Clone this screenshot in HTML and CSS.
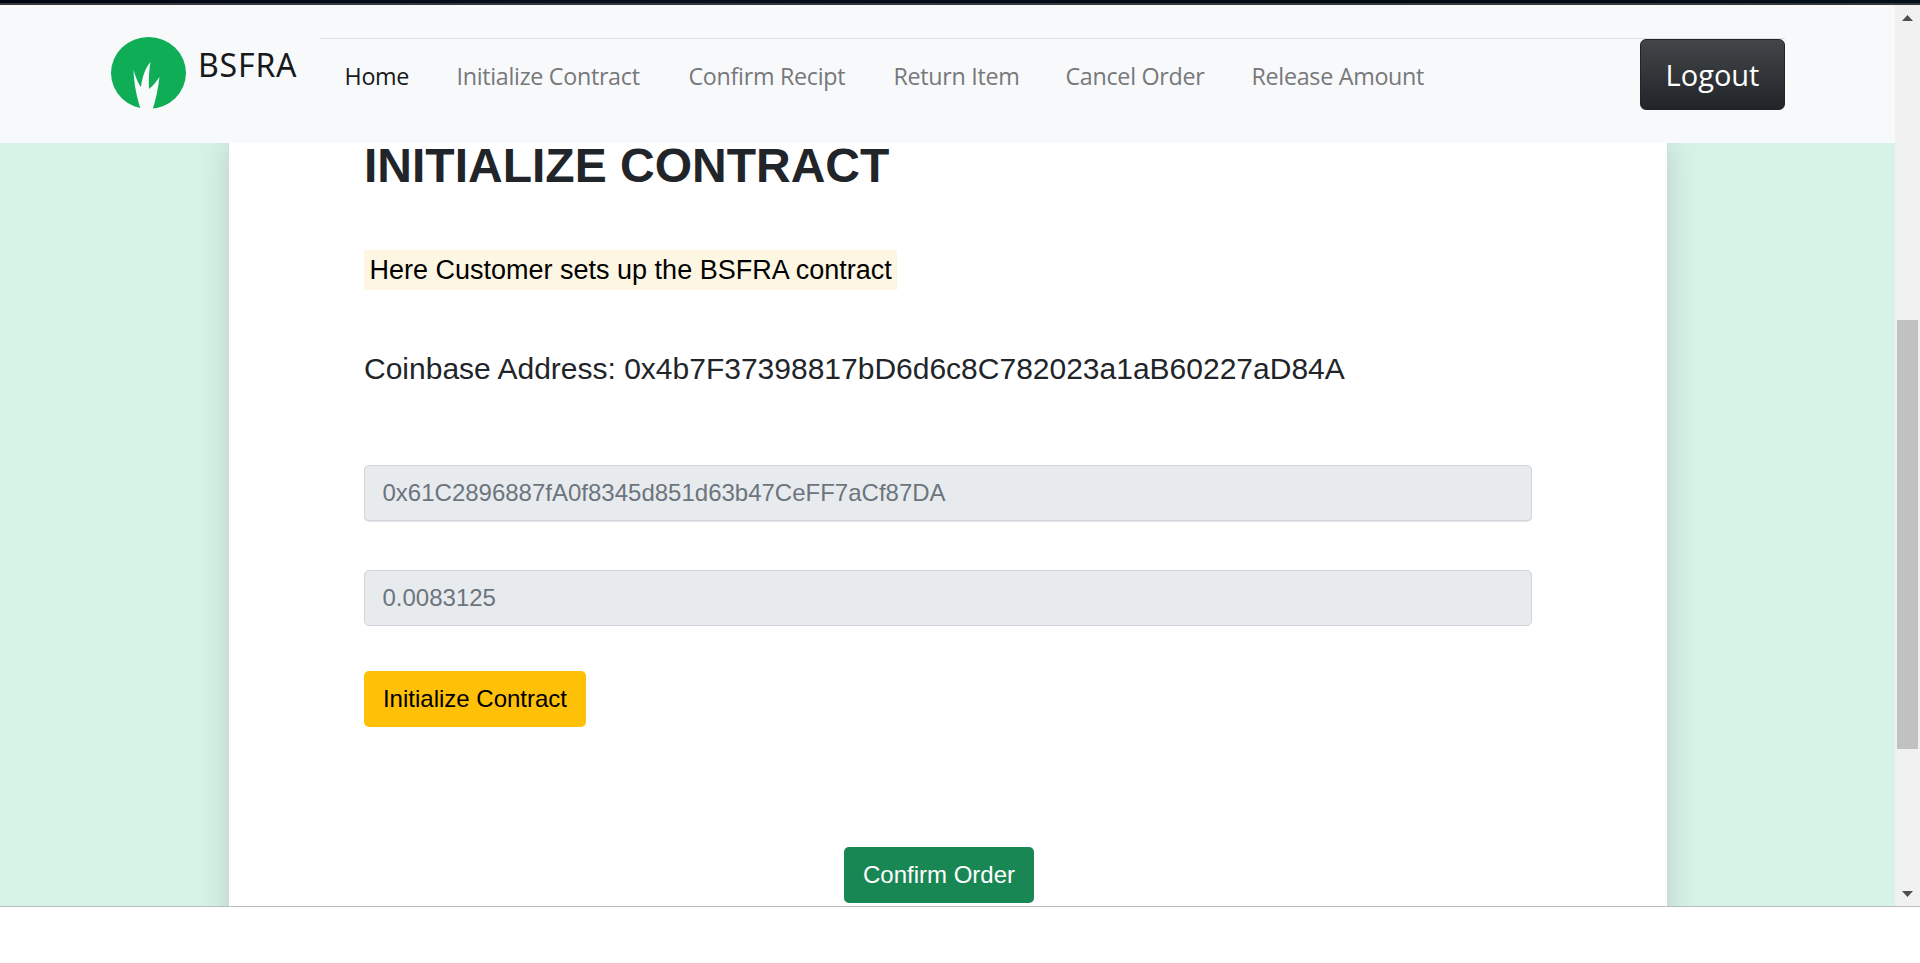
FILE: index.html
```html
<!DOCTYPE html>
<html lang="en">
<head>
<meta charset="utf-8">
<title>BSFRA</title>
<link rel="stylesheet" href="styles.css">
</head>
<body>
<div class="strip"></div>
<div class="window">
  <div class="page">
    <header class="navbar">
      <a class="brand">
        <svg class="logo" viewBox="0 0 75 72" preserveAspectRatio="none">
          <ellipse cx="37.5" cy="36" rx="37.5" ry="36" fill="#10ad57"/>
          <path d="M30 73C26 61 23 48 22.5 33C25 41 27 46 30 50C31 41 34 31 39.5 25C38 34 37.5 43 38 52C42 49 45 45 48.5 40C47 52 45 62 41.5 73Z" fill="#f8f9fb"/>
        </svg>
        <span class="brand-name">BSFRA</span>
      </a>
      <div class="menu">
        <nav class="links">
          <a class="link active">Home</a>
          <a class="link">Initialize Contract</a>
          <a class="link">Confirm Recipt</a>
          <a class="link">Return Item</a>
          <a class="link">Cancel Order</a>
          <a class="link">Release Amount</a>
        </nav>
        <button class="logout">Logout</button>
      </div>
    </header>
    <main class="backdrop">
      <section class="card">
        <h1 class="title">INITIALIZE CONTRACT</h1>
        <p class="lead"><mark class="mark">Here Customer sets up the BSFRA contract</mark></p>
        <p class="address">Coinbase Address: 0x4b7F37398817bD6d6c8C782023a1aB60227aD84A</p>
        <div class="field underlined">0x61C2896887fA0f8345d851d63b47CeFF7aCf87DA</div>
        <div class="field amount">0.0083125</div>
        <button class="btn warning">Initialize Contract</button>
        <button class="btn success">Confirm Order</button>
      </section>
    </main>
  </div>
  <div class="scrollbar">
    <svg class="arrow" viewBox="0 0 11 6"><path d="M5.5 0L11 6H0Z" fill="#505050"/></svg>
    <div class="thumb"></div>
    <svg class="arrow" viewBox="0 0 11 6"><path d="M0 0H11L5.5 6Z" fill="#505050"/></svg>
  </div>
</div>
</body>
</html>
```
FILE: styles.css
```css
* { box-sizing: border-box; }
body {
  margin: 0;
  height: 963px;
  overflow: hidden;
  background: #fff;
  color: #212529;
  font-family: "Liberation Sans", Arial, sans-serif;
}
.strip {
  height: 5px;
  background: linear-gradient(90deg, #020612, #06101f 30%, #020a14 70%, #03101a);
  border-bottom: 2px solid #36383c;
}
.window {
  display: flex;
  height: 902px;
  border-bottom: 1px solid #bbb;
}
.page {
  width: 1895px;
  display: flex;
  flex-direction: column;
}
.navbar {
  height: 138px;
  background: #f8f9fb;
  padding: 32px 110px 0 111px;
  display: flex;
  align-items: flex-start;
  font-family: "Open Sans", "Noto Sans", sans-serif;
}
.brand { display: flex; width: 209px; }
.logo { width: 75px; height: 72px; }
.brand-name {
  margin-left: 12px;
  margin-top: 4px;
  font: 32px/48px "Noto Sans", sans-serif;
  letter-spacing: 0.8px;
  color: #17191b;
}
.menu {
  width: 1465px;
  margin-top: 1px;
  border-top: 1px solid #dee2e6;
  display: flex;
  justify-content: space-between;
  align-items: flex-start;
}
.links {
  display: grid;
  grid-template-columns: 112px 232px 205px 172px 186px 200px;
  padding-left: 24.5px;
  padding-top: 19px;
}
.link {
  font-size: 23.3px;
  letter-spacing: -0.3px;
  line-height: 36px;
  white-space: nowrap;
  color: #77787a;
}
.active { color: #17191b; }
.logout {
  width: 145px;
  height: 71px;
  border: 1px solid #212529;
  border-radius: 6px;
  padding: 0;
  background: linear-gradient(#424649, #212529);
  color: #fff;
  font: 29px/40px "Open Sans", sans-serif;
}
.backdrop {
  flex: 1;
  min-height: 0;
  overflow: hidden;
  background: #d7f3e8;
  padding-left: 228px;
}
.card {
  width: 1440px;
  height: 800px;
  padding: 0 135px;
  background: #fff;
  border: 1px solid #d5ddd9;
  border-width: 0 1px;
  box-shadow: 0 0 30px rgba(0, 0, 0, 0.15);
  display: flex;
  flex-direction: column;
  align-items: flex-start;
}
.title {
  margin: 0;
  font-size: 48px;
  line-height: 45px;
  font-weight: 700;
  white-space: nowrap;
}
.lead { margin: 62px 0 0; height: 40px; }
.mark {
  display: block;
  height: 40px;
  padding: 0 5.5px;
  background: #fdf6e3;
  color: #000;
  font-size: 27px;
  line-height: 40px;
  white-space: nowrap;
}
.address {
  margin: 61px 0 0;
  font-size: 30px;
  line-height: 36px;
  white-space: nowrap;
}
.field {
  width: 1168px;
  height: 56px;
  border: 1px solid #ced4da;
  border-radius: 5px;
  background: #e8ebee;
  color: #6c757d;
  padding: 0 17.5px;
  font-size: 24px;
  line-height: 54px;
}
.underlined { margin-top: 78px; box-shadow: 0 1px 0 #e4e6e8; }
.amount { margin-top: 49px; }
.btn {
  height: 56px;
  border: 0;
  border-radius: 5px;
  font: 24px/54px "Liberation Sans", Arial, sans-serif;
  padding: 0;
  white-space: nowrap;
}
.warning { width: 222px; margin-top: 45px; background: #ffc107; color: #000; }
.success { width: 190px; margin-top: 120px; margin-left: 480px; background: #198754; color: #fff; }
.scrollbar {
  width: 25px;
  background: #f1f1f1;
  display: flex;
  flex-direction: column;
  align-items: center;
  padding: 10px 0 9px;
}
.arrow { width: 11px; height: 6px; }
.thumb {
  width: 21px;
  height: 429px;
  margin: 299px 0 auto;
  background: #c1c1c1;
}
```
